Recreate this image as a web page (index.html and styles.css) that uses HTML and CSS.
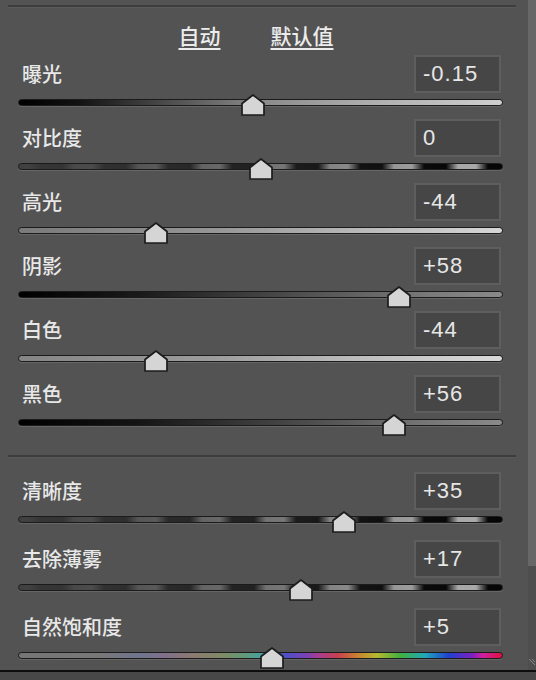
FILE: index.html
```html
<!DOCTYPE html>
<html lang="zh">
<head>
<meta charset="utf-8">
<title>基本</title>
<link rel="stylesheet" href="styles.css">
</head>
<body>
<div class="app">
  <div class="main">
    <div class="panel">
      <div class="divider top"></div>
      <div class="presets">
        <a class="preset">自动</a>
        <a class="preset">默认值</a>
      </div>

      <div class="row">
        <div class="row-head"><span class="label">曝光</span><span class="value">-0.15</span></div>
        <div class="slider"><div class="track t-exposure"></div><svg class="thumb" style="--p:0.485" viewBox="0 0 24 22"><path d="M1 9.5 L12 1 L23 9.5 V21 H1 Z"/></svg></div>
      </div>
      <div class="row">
        <div class="row-head"><span class="label">对比度</span><span class="value">0</span></div>
        <div class="slider"><div class="track t-contrast"></div><svg class="thumb" style="--p:0.5" viewBox="0 0 24 22"><path d="M1 9.5 L12 1 L23 9.5 V21 H1 Z"/></svg></div>
      </div>
      <div class="row">
        <div class="row-head"><span class="label">高光</span><span class="value">-44</span></div>
        <div class="slider"><div class="track t-highlights"></div><svg class="thumb" style="--p:0.28" viewBox="0 0 24 22"><path d="M1 9.5 L12 1 L23 9.5 V21 H1 Z"/></svg></div>
      </div>
      <div class="row">
        <div class="row-head"><span class="label">阴影</span><span class="value">+58</span></div>
        <div class="slider"><div class="track t-shadows"></div><svg class="thumb" style="--p:0.79" viewBox="0 0 24 22"><path d="M1 9.5 L12 1 L23 9.5 V21 H1 Z"/></svg></div>
      </div>
      <div class="row">
        <div class="row-head"><span class="label">白色</span><span class="value">-44</span></div>
        <div class="slider"><div class="track t-whites"></div><svg class="thumb" style="--p:0.28" viewBox="0 0 24 22"><path d="M1 9.5 L12 1 L23 9.5 V21 H1 Z"/></svg></div>
      </div>
      <div class="row">
        <div class="row-head"><span class="label">黑色</span><span class="value">+56</span></div>
        <div class="slider"><div class="track t-blacks"></div><svg class="thumb" style="--p:0.78" viewBox="0 0 24 22"><path d="M1 9.5 L12 1 L23 9.5 V21 H1 Z"/></svg></div>
      </div>

      <div class="divider mid"></div>

      <div class="row tall">
        <div class="row-head"><span class="label">清晰度</span><span class="value">+35</span></div>
        <div class="slider"><div class="track t-clarity"></div><svg class="thumb" style="--p:0.675" viewBox="0 0 24 22"><path d="M1 9.5 L12 1 L23 9.5 V21 H1 Z"/></svg></div>
      </div>
      <div class="row tall">
        <div class="row-head"><span class="label">去除薄雾</span><span class="value">+17</span></div>
        <div class="slider"><div class="track t-clarity"></div><svg class="thumb" style="--p:0.585" viewBox="0 0 24 22"><path d="M1 9.5 L12 1 L23 9.5 V21 H1 Z"/></svg></div>
      </div>
      <div class="row tall">
        <div class="row-head"><span class="label">自然饱和度</span><span class="value">+5</span></div>
        <div class="slider"><div class="track t-vibrance"></div><svg class="thumb" style="--p:0.525" viewBox="0 0 24 22"><path d="M1 9.5 L12 1 L23 9.5 V21 H1 Z"/></svg></div>
      </div>
    </div>
    <div class="scrollbar">
      <div class="scroll-thumb"></div>
      <div class="scroll-track">
        <svg class="grip" viewBox="0 0 8 8"><path d="M1 1 L7 7 M4 1 L7 4"/></svg>
      </div>
    </div>
  </div>
  <div class="bottom-bar"></div>
</div>
</body>
</html>
```
FILE: styles.css
```css
html, body {
  margin: 0;
  padding: 0;
  background: #535353;
}
body {
  width: 536px;
  height: 680px;
  overflow: hidden;
  font-family: "Noto Sans CJK SC", "Noto Sans", sans-serif;
}
.app {
  display: flex;
  flex-direction: column;
  height: 680px;
}
.main {
  display: flex;
  height: 670px;
  overflow: hidden;
}
.panel {
  width: 528px;
  height: 670px;
  overflow: hidden;
}
.divider {
  height: 2px;
  background: #3d3d3d;
  border-bottom: 1px solid #5a5a5a;
  margin: 0 12px 0 8px;
}
.divider.top {
  margin-top: 5px;
}
.divider.mid {
  margin-top: 16px;
  margin-bottom: 14px;
}
.presets {
  height: 47px;
  display: flex;
  justify-content: center;
  gap: 50px;
  padding-right: 16px;
  box-sizing: border-box;
  align-items: flex-start;
  padding-top: 14px;
}
.preset {
  color: #ececec;
  font-size: 21px;
  font-weight: 500;
  line-height: 26px;
  text-decoration: underline;
  text-underline-offset: 4px;
  text-decoration-thickness: 1.5px;
}
.row-head {
  display: flex;
  justify-content: space-between;
  align-items: center;
  height: 38px;
  padding-left: 22px;
  padding-right: 27px;
}
.label {
  color: #e8e8e8;
  font-size: 20px;
  font-weight: 500;
  line-height: 24px;
}
.value {
  box-sizing: border-box;
  width: 87px;
  height: 38px;
  border: 2px solid #5e5e5e;
  background: #464646;
  color: #e6e6e6;
  font-family: "Liberation Sans", Arial, sans-serif;
  font-size: 22px;
  letter-spacing: 1px;
  line-height: 34px;
  padding-left: 7px;
}
.slider {
  position: relative;
  height: 26px;
  margin: 0 25px 0 18px;
}
.row.tall .slider {
  height: 30px;
}
.track {
  position: absolute;
  left: 0;
  right: 0;
  top: 6px;
  height: 5px;
  border: 1px solid #1b1b1b;
  border-radius: 4px;
  box-shadow: 0 1px 0 #666;
}
.thumb {
  position: absolute;
  top: 1px;
  left: calc(4px + var(--p) * (100% - 8px));
  width: 24px;
  height: 22px;
  margin-left: -12px;
  overflow: visible;
}
.thumb path {
  fill: #d5d5d5;
  stroke: #1c1c1c;
  stroke-width: 1.7;
  stroke-linejoin: round;
}
.t-exposure {
  background: linear-gradient(to right, #000 0%, #111 12%, #4a4a4a 30%, #8a8a8a 50%, #aaa 70%, #cfcfcf 100%);
}
.t-highlights {
  background: linear-gradient(to right, #7a7a7a 0%, #959595 40%, #b8b8b8 70%, #d6d6d6 100%);
}
.t-shadows {
  background: linear-gradient(to right, #000 0%, #1a1a1a 25%, #4a4a4a 55%, #7a7a7a 85%, #8a8a8a 100%);
}
.t-whites {
  background: linear-gradient(to right, #858585 0%, #9c9c9c 40%, #bdbdbd 70%, #dadada 100%);
}
.t-blacks {
  background: linear-gradient(to right, #000 0%, #151515 25%, #454545 55%, #777 85%, #8a8a8a 100%);
}
.t-contrast,
.t-clarity {
  background:
    linear-gradient(to right, rgba(58,58,58,0.95) 0%, rgba(58,58,58,0.8) 20%, rgba(58,58,58,0.45) 55%, rgba(58,58,58,0) 90%),
    repeating-linear-gradient(to right, #a8a8a8 0px, #a8a8a8 9px, #060606 21px, #060606 43px, #a8a8a8 55px, #a8a8a8 64px);
}
.t-vibrance {
  background: linear-gradient(to right,
    #767676 0%, #787878 17%, #6f7590 25%, #80708a 30%, #8c7a70 36%, #7f8a66 42%,
    #5f9a7a 47%, #4aa0a0 50%, #4a50c8 55%, #8040b0 60%, #a83c90 62%, #c84050 66%,
    #c88030 70%, #b8b830 74%, #40b040 79%, #20a8b8 84%, #2040d0 89%, #8020c0 94%,
    #d020a0 96%, #e01040 100%);
}
.scrollbar {
  width: 8px;
  display: flex;
  flex-direction: column;
}
.scroll-thumb {
  height: 566px;
  background: #676767;
}
.scroll-track {
  flex: 1;
  background: #4e4e4e;
  position: relative;
}
.grip {
  position: absolute;
  right: 0;
  bottom: 4px;
  width: 8px;
  height: 8px;
}
.grip path {
  stroke: #888;
  stroke-width: 1;
  fill: none;
}
.bottom-bar {
  height: 8px;
  border-top: 2px solid #0e0e0e;
  background: #484848;
}
```
